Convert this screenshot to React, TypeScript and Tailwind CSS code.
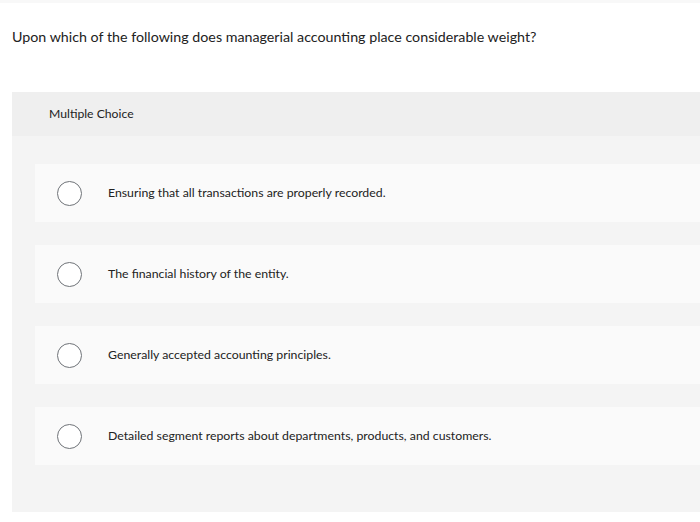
const options = [
  'Ensuring that all transactions are properly recorded.',
  'The financial history of the entity.',
  'Generally accepted accounting principles.',
  'Detailed segment reports about departments, products, and customers.',
];

export default function App() {
  return (
    <div className="w-[700px] h-[522px] bg-white overflow-hidden" style={{ fontFamily: 'Lato, "Liberation Sans", sans-serif' }}>
      <div className="h-[3px] bg-[#f8f8f8]" />
      <div className="pl-[12px] pt-[25px] text-[14.25px] text-[#222] leading-[18px]">
        Upon which of the following does managerial accounting place considerable weight?
      </div>
      <div className="ml-[12px] mt-[46px] h-[420px] bg-[#f4f4f4]">
        <div className="h-[44px] bg-[#efefef] pl-[37px] flex items-center text-[12.2px] text-[#222]">
          Multiple Choice
        </div>
        <div className="flex flex-col gap-[23px] pt-[28px] pl-[23px]">
          {options.map((o) => (
            <div key={o} className="h-[58px] bg-[#fafafa] flex items-center">
              <span className="ml-[22px] w-[25px] h-[25px] rounded-full border-[1.5px] border-[#6f7378] bg-white shrink-0" />
              <span className="ml-[26px] text-[12.3px] text-[#222]">{o}</span>
            </div>
          ))}
        </div>
      </div>
    </div>
  );
}
